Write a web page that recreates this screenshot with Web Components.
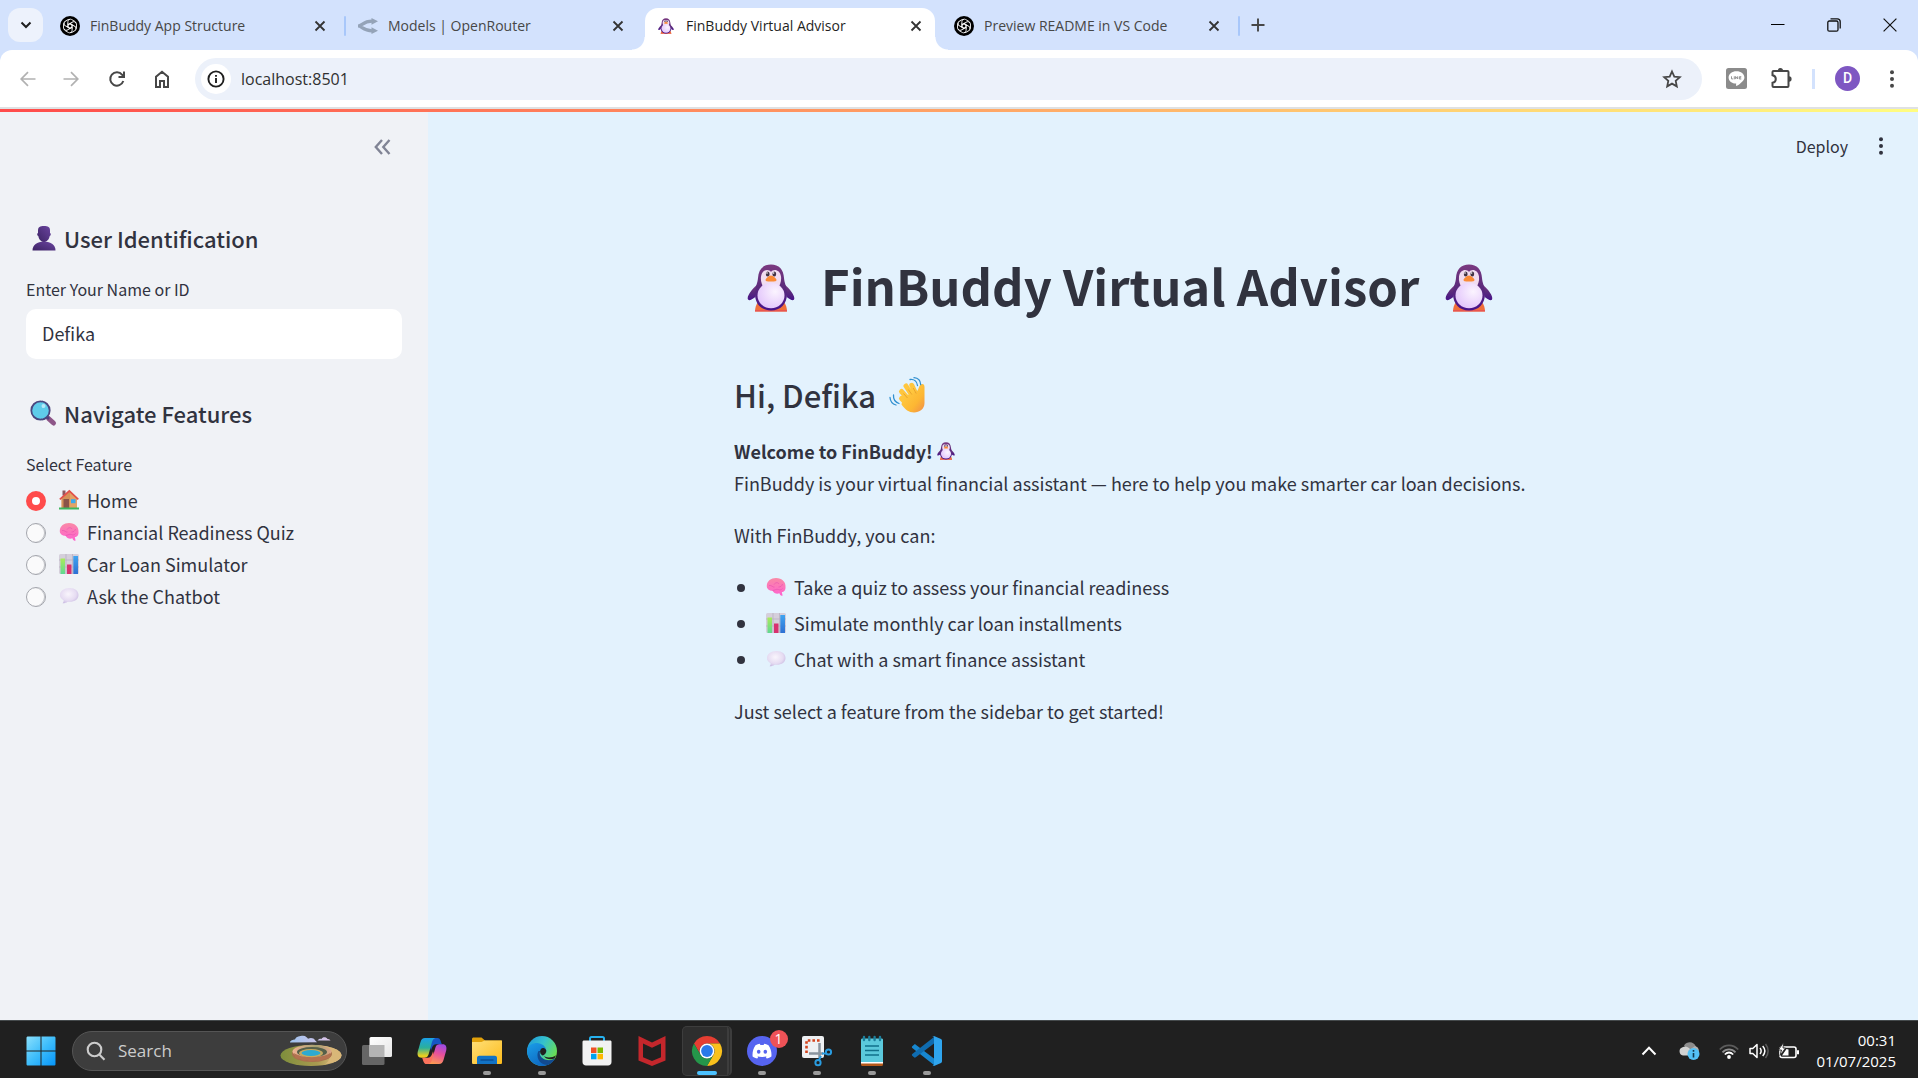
<!DOCTYPE html>
<html lang="en">
<head>
<meta charset="utf-8">
<title>FinBuddy Virtual Advisor</title>
<style>
html, body { margin: 0; height: 100%; }
body { overflow: hidden; background: #e3f2fd; }
</style>
</head>
<body>
<desk-top></desk-top>
<script>
const UI = '"Open Sans", "Noto Sans", sans-serif';
const APP = '"Noto Sans CJK SC", "Noto Sans", sans-serif';

const stroke = (w, d, cap = 'butt') => `<g fill="none" stroke="currentColor" stroke-width="${w}" stroke-linecap="${cap}">${d}</g>`;

/* Each icon: [viewBox, markup] */
const ICONS = {
  chevdown: ['0 0 12 12', stroke(2, '<path d="M1.5 3.5 6 8l4.500-4.500"/>')],
  close: ['0 0 12 12', stroke(1.8, '<path d="M1.500 1.500l9 9M10.500 1.500l-9 9"/>')],
  plus: ['0 0 14 14', stroke(1.9, '<path d="M7 .5v13M.5 7h13"/>')],
  gpt: ['0 0 20 20', `<circle cx="10" cy="10" r="10" fill="#000"/><g fill="none" stroke="#fff" stroke-width=".9">${[0,60,120,180,240,300].map(a => `<path transform="rotate(${a} 10 10)" d="M10 7.700 7.900 8.900V5.600a2.500 2.500 0 0 1 3.700-2.100l2.900 1.700a2.500 2.500 0 0 1 1.100 1.400M10 7.700l3.300 1.900"/>`).join('')}</g>`],
  router: ['0 0 20 16', '<g fill="none" stroke="#94a3b8" stroke-width="3.200"><path d="M0 8c4 0 5-4.800 14-4.800M0 8c4 0 5 4.800 14 4.800"/></g><path fill="#94a3b8" d="M13.500 0 20 3.300l-6.500 3.400zM13.500 9.300l6.500 3.400-6.500 3.300z"/>'],
  minimize: ['0 0 14 14', '<path fill="#000" d="M0 6h13.500v1H0z"/>'],
  restore: ['0 0 14 14', stroke(1.3, '<rect x=".8" y="3" width="10.200" height="10.200" rx="1.500"/><path d="M3.500.9h6.800a2.900 2.900 0 0 1 2.900 2.900v6.700"/>')],
  winclose: ['0 0 14 14', stroke(1.2, '<path d="M.6.6l12.800 12.800M13.400.6.6 13.400"/>')],
  back: ['0 0 16 16', stroke(1.7, '<path d="M15.500 8H1.500M8 1.200 1.200 8 8 14.800"/>')],
  forward: ['0 0 16 16', stroke(1.7, '<path d="M.5 8h14M8 1.200 14.800 8 8 14.800"/>')],
  reload: ['0 0 16 16', stroke(2, '<path d="M14.300 10A6.700 6.700 0 1 1 13.200 3.800L15 5.700"/><path d="M15 .5v5.500H9.500"/>')],
  home: ['0 0 16 18', stroke(2, '<path d="M2 17V6.800L8 1.700l6 5.100V17h-4v-6H6v6z"/>')],
  info: ['0 0 18 18', stroke(1.9, '<circle cx="9" cy="9" r="7.600"/><path d="M9 8v5M9 5v1.800"/>')],
  star: ['0 0 20 20', stroke(1.8, '<path d="M10 2.500l2.300 5.100 5.500.6-4.100 3.700 1.100 5.500-4.800-2.800-4.800 2.800 1.100-5.500-4.100-3.700 5.500-.6z"/>')],
  line: ['0 0 21 21', '<rect width="21" height="21" rx="2.500" fill="#8b8b8b"/><path fill="#fff" d="M10.500 3.200c4.400 0 7.900 2.700 7.900 6.200 0 3.100-3.500 5.700-7.500 8.400-.8.500-1-.1-.7-2.200-4.300-.1-7.600-2.700-7.600-6.200s3.500-6.200 7.900-6.200z"/><path fill="none" stroke="#8b8b8b" stroke-width=".9" d="M5.500 8.300v2.600h1.700M8.300 8.300v3M9.600 11.100V8.500l2 2.500V8.300M15.300 8.700h-2v2.300h2M13.300 9.800h1.800"/>'],
  puzzle: ['0 0 21 21', '<path d="M2.500 3h14c.6 0 1 .4 1 1v14c0 .6-.4 1-1 1h-14c-.6 0-1-.4-1-1v-3.200c2.200-.4 3.300-1.800 3.300-3.800S3.700 7.600 1.500 7.200V4c0-.6.4-1 1-1z" fill="none" stroke="currentColor" stroke-width="2"/><path fill="currentColor" d="M6.800 2.500a2.600 2.500 0 0 1 5.200 0zM18 8.200a2.600 2.800 0 0 1 0 5.600z"/>'],
  dots: ['0 0 4 18', '<g fill="currentColor"><circle cx="2" cy="2.300" r="2"/><circle cx="2" cy="9" r="2"/><circle cx="2" cy="15.700" r="2"/></g>'],
  collapse: ['0 0 17 16', stroke(2.4, '<path d="M8 1 1.800 8 8 15M15.500 1 9.300 8l6.200 7"/>')],

  penguin: ['0 0 48 48', `<defs><linearGradient id="b" x1="0" y1="0" x2="0" y2="1"><stop offset="0" stop-color="#7b3a80"/><stop offset=".5" stop-color="#5a2a7c"/><stop offset="1" stop-color="#47128a"/></linearGradient><radialGradient id="w" cx=".65" cy=".35" r=".8"><stop offset="0" stop-color="#fbf4ff"/><stop offset="1" stop-color="#e0c0fb"/></radialGradient></defs>
    <path fill="#f0703a" d="M11 38h26c2 3 3 6 3 9.500H8c0-3.500 1-6.500 3-9.500z"/><path fill="#e85550" d="M8 46h32v1.500H8z"/>
    <path fill="url(#b)" d="M11 20C4 26 0 32 .8 35c.8 2.500 4 .5 7.500-2zM37 20c7 6 11 12 10.200 15-.8 2.500-4 .5-7.500-2z"/>
    <path fill="url(#b)" d="M24 .5c8 0 12.500 5 13 13.500.3 5 3 9 3 16C40 40 33.500 46.500 24 46.500S8 40 8 30c0-7 2.700-11 3-16C11.500 5.500 16 .5 24 .5z"/>
    <path fill="#f1dcf0" d="M24 8c2.500-3.500 9-2.500 10 4.500.6 4.500-1 8-3 12H17c-2-4-3.600-7.500-3-12C15 5.500 21.500 4.500 24 8z"/>
    <ellipse cx="24" cy="31.500" rx="13.500" ry="12.700" fill="url(#w)"/>
    <ellipse cx="20.700" cy="10" rx="1.900" ry="2.600" fill="#423344"/><ellipse cx="27.300" cy="10" rx="1.900" ry="2.600" fill="#423344"/><circle cx="20" cy="9" r=".8" fill="#fff"/><circle cx="26.600" cy="9" r=".8" fill="#fff"/>
    <path fill="#fa8a35" d="M24 11.500c2 0 5.500 3.200 5.500 4.500 0 1.500-2.500 1.500-5.500 1.500s-5.500 0-5.500-1.500c0-1.300 3.500-4.500 5.500-4.500z"/>`],
  wave: ['0 0 36 36', `<defs><linearGradient id="h" x1="0" y1="0" x2="1" y2="1"><stop offset="0" stop-color="#ffd348"/><stop offset=".65" stop-color="#fdb733"/><stop offset="1" stop-color="#f08c4a"/></linearGradient></defs>
    <g stroke="#ffc63e" stroke-width="5" stroke-linecap="round" fill="none"><path d="M12.500 21.500 17 26M12.500 14.500l8 9M17 9l7 11M22.800 8.300l5 10.500"/></g>
    <path fill="url(#h)" d="M14 20l14-6c1.500-1 1.500-5 4-6.500 2-1 3.500 0 3.500 2.500V26c0 6-5 9.500-10.500 9.500-5 0-9-3-12.500-8z"/>
    <path d="M14.500 16.500l4 4.500M19.300 12.500l3.500 5M24.200 11l3 5.500" stroke="#e59a28" stroke-width=".8" fill="none"/>
    <path d="M21 2.500c4-.5 7 2 7.500 6M25 .7c4 .3 6.500 3 6.700 7M4.500 18c-.3 4 1.500 7 5.500 8.500M1 20.500c.3 4 2.500 6.500 6 7.500" stroke="#3190d0" stroke-width="1.300" fill="none" stroke-linecap="round"/>`],
  person: ['0 0 24 24', '<defs><linearGradient id="p" x1="0" x2="1" y1="1" y2="0"><stop offset="0" stop-color="#3c2364"/><stop offset="1" stop-color="#6b45a0"/></linearGradient></defs><path fill="url(#p)" d="M6 4.500C6 1 8 0 12 0s6 1 6 4.500V7c1.200.3 1 2.600-.3 3-.6 3.500-3 6-5.700 6s-5.100-2.500-5.700-6C5 9.600 4.800 7.300 6 7z"/><path fill="url(#p)" d="M.5 24.500C.5 19 5 15.500 12 15.500S23.500 19 23.500 24.500z"/>'],
  search: ['0 0 26 26', '<path d="M18.500 18.500l5 4.500" stroke="#8d5688" stroke-width="5" stroke-linecap="round"/><path d="M16 16l3 3" stroke="#54417f" stroke-width="2.500"/><circle cx="10.500" cy="10.500" r="9.200" fill="#5fccea" stroke="#4a477f" stroke-width="1.800"/><circle cx="13.500" cy="6" r="2" fill="#b7e9f8"/>'],
  house: ['0 0 20 20', '<path fill="#8d5960" d="M3.500.5h3v5h-3z"/><path fill="#e3a265" d="M2.500 8 11 .8 18 8v10.500H2.500z"/><path fill="#c87f4b" d="M2.500 8.500 11 1v17.500H2.500z" opacity=".5"/><path fill="#8a5348" d="M4.500 9h5.500v9H4.500z"/><path fill="#3ba8ee" d="M12 9.200h4.500v4H12z"/><path d="M.8 9.300 10.300 1l9 8.300" fill="none" stroke="#e2504a" stroke-width="1.700"/><path fill="#3db65c" d="M0 17.500h20v2H0z"/>'],
  brain: ['0 0 20 20', '<defs><linearGradient id="r" x1="0" x2="0" y1="0" y2="1"><stop offset="0" stop-color="#f98aa6"/><stop offset="1" stop-color="#ff62cf"/></linearGradient></defs><path fill="url(#r)" d="M10 1c6 0 10 4 9.500 9 .3 3-1.500 5-3.700 5l.8 3.500c-1.300.8-2.600-.1-3.200-2.200-3 1-5.500-.3-6.900-2.600C3.500 14 .5 12 .8 8.500 1 4 5 1 10 1z"/><path fill="none" stroke="#e855b0" stroke-width=".7" d="M3 8.500c3-.5 3.500 2 5.500 1.500M8 7.500c1.500-2.300 4-2.300 5-.5M12.500 10c2 0 3.500-1 4-3M6.500 13.500c2 0 4-2 6-1s3 0 4-1"/>'],
  chart: ['0 0 20 20', '<defs><linearGradient id="g" x1="0" x2="0" y1="0" y2="1"><stop offset="0" stop-color="#a9ec5a"/><stop offset="1" stop-color="#5fd893"/></linearGradient><linearGradient id="u" x1="0" x2="0" y1="0" y2="1"><stop offset="0" stop-color="#3fa4f0"/><stop offset="1" stop-color="#2e70d3"/></linearGradient></defs><rect width="20" height="20" rx="1.500" fill="#d5cfdb"/><path d="M0 6h20M0 13h20M7 0v20M13.500 0v20" stroke="#b5aebf" stroke-width=".7"/><path fill="url(#g)" d="M1.500 4.500H6V20H1.500z"/><path fill="#d8316f" d="M8 10.500h4.500V20H8z"/><path fill="url(#u)" d="M14.300 2H19v18h-4.700z"/>'],
  bubble: ['0 0 20 20', '<defs><radialGradient id="c" cx=".45" cy=".4" r=".7"><stop offset="0" stop-color="#f9f5fc"/><stop offset=".6" stop-color="#e6dcf2"/><stop offset="1" stop-color="#c0b0dc"/></radialGradient></defs><path fill="url(#c)" d="M10.500 2C16 2 19.500 5 19.500 9s-3.500 6.800-9 6.800l-2-.1c-1 1-3.200 1.600-4.900 1.500.9-.8 1.200-2 1-3C2 12.800 1 11 1 9c0-4 4-7 9.500-7z"/>'],

  windows: ['0 0 30 30', '<defs><linearGradient id="s" x1="0" y1="0" x2="1" y2="1"><stop offset="0" stop-color="#8be0fc"/><stop offset=".5" stop-color="#3ebdfb"/><stop offset="1" stop-color="#0595fa"/></linearGradient></defs><path fill="url(#s)" d="M2 .5h12.500v14H.5V2C.5 1 1 .5 2 .5zM15.500.5H28c1 0 1.500.5 1.500 1.500v12.500h-14zM.5 15.500h14v14H2c-1 0-1.500-.5-1.500-1.500zM15.500 15.500h14V28c0 1-.5 1.500-1.500 1.500H15.500z"/>'],
  magnify: ['0 0 20 20', stroke(2.1, '<circle cx="8.500" cy="8.500" r="6.800"/><path d="M13.300 13.500l5.200 5.300"/>')],
  spring: ['0 0 62 32', '<defs><linearGradient id="k" x1="0" x2="1"><stop offset="0" stop-color="#7e8e3c"/><stop offset=".6" stop-color="#a99a50"/><stop offset="1" stop-color="#e4c28a"/></linearGradient><linearGradient id="cl" x1="0" x2="1"><stop offset="0" stop-color="#9fc3ee"/><stop offset="1" stop-color="#dcc2e6"/></linearGradient><linearGradient id="rim" x1="0" x2="1"><stop offset="0" stop-color="#f0b193"/><stop offset=".6" stop-color="#a5a070"/><stop offset="1" stop-color="#dda588"/></linearGradient></defs><ellipse cx="31" cy="20.500" rx="30.500" ry="10.500" fill="url(#k)"/><path fill="#d9b778" d="M31 10c17 0 30 4 30.500 10-.5 6-9 8-16 9 8-6 5-15-14.500-19z"/><ellipse cx="32" cy="19" rx="20" ry="8" fill="#a86f4d"/><ellipse cx="32" cy="16.500" rx="19.500" ry="6.800" fill="url(#rim)"/><ellipse cx="32" cy="17" rx="15" ry="5" fill="#55604a"/><ellipse cx="31" cy="18.200" rx="12" ry="4.200" fill="#c6a95f"/><ellipse cx="31" cy="18" rx="9.500" ry="2.900" fill="#2caad0"/><path fill="#b37250" d="M15 22c2 3 5 1 7 3s5-1 7 1 5-1 8 0 6-2 8-2 5-1 6-3l-1-3c-6 5-28 6-36 0z"/><path fill="url(#cl)" d="M10 7.500c0-2 3-3 5-3C16 1.500 20 .8 23 .8c3 0 4 2 5 3 3-1.500 6-.5 7 1.500l2 2zM37.500 5.500c1-1.500 3-2 4-1.500 1-2.500 5-2 6 0 1.500-.3 2.500.6 3 1.500z"/>'],
  taskview: ['0 0 30 28', '<defs><linearGradient id="t" x1="0" y1="0" x2="1" y2="1"><stop offset="0" stop-color="#fff"/><stop offset="1" stop-color="#e6e6e6"/></linearGradient></defs><rect y="8" width="22.500" height="20" rx="1.500" fill="#666"/><rect x="7.500" width="22.500" height="20" rx="1.500" fill="url(#t)"/><path fill="#b4b4b4" d="M7.500 8h15v12h-15z"/>'],
  copilot: ['0 0 30 28', '<defs><linearGradient id="c1" x1="0" y1="0" x2="0" y2="1"><stop offset="0" stop-color="#1ba0e8"/><stop offset=".5" stop-color="#2bb09a"/><stop offset=".9" stop-color="#e8cf20"/></linearGradient><linearGradient id="c2" x1=".6" y1="0" x2=".3" y2="1"><stop offset="0" stop-color="#a04be0"/><stop offset=".45" stop-color="#e8509b"/><stop offset="1" stop-color="#fd9a52"/></linearGradient></defs><path fill="#1556c5" d="M16 1h4.500c3 0 3 3.500 4.500 6.300h-6c-3 0-4 3-5 6.500L12.500 8z"/><path fill="url(#c1)" d="M8 1h10.500c-3 1-3.500 4-4.300 7l-2.500 9c-1 3-2 3.700-5 3.700H4.500C1 20.700 0 18 .8 14.500L3.500 5C4.300 2.300 5.500 1 8 1z"/><path fill="#fb725c" d="M14 27H9.500c-3 0-3-3.500-4.500-6.300h6c3 0 4-3 5-6.500l1.500 5.500z"/><path fill="url(#c2)" d="M22 27H11.500c3-1 3.500-4 4.300-7l2.500-9c1-3 2-3.700 5-3.700h2.200c3.500 0 4.500 2.700 3.700 6.200L26.500 23c-.8 2.700-2 4-4.500 4z"/>'],
  folder: ['0 0 30 28', '<defs><linearGradient id="f" x1="0" x2="1" y1="0" y2="1"><stop offset="0" stop-color="#ffdf78"/><stop offset="1" stop-color="#fdbc1c"/></linearGradient></defs><path fill="#e2a10a" d="M0 2C0 1 .8.500 1.500.500H9.500l3.500 3h15.500c1 0 1.500.6 1.500 1.500v6H0z"/><path fill="url(#f)" d="M0 5h9.500l3-1.500H30V25.500c0 1-.5 1.500-1.500 1.500h-27C.5 27 0 26.500 0 25.500z"/><path fill="#1273c5" d="M5 27v-6c0-1.500 1-2.300 2.300-2.300h15.400c1.300 0 2.300.8 2.300 2.300v6z"/><path d="M8.500 23h13" stroke="#0b4f97" stroke-width="1.500"/>'],
  edge: ['0 0 30 30', '<defs><linearGradient id="e1" x1="0" x2="1" y1="0" y2=".6"><stop offset="0" stop-color="#1c94dc"/><stop offset=".5" stop-color="#35c1cd"/><stop offset="1" stop-color="#6de14b"/></linearGradient><linearGradient id="e2" x1="0" x2=".7" y1="0" y2="1"><stop offset="0" stop-color="#1a9ee8"/><stop offset="1" stop-color="#0d62bd"/></linearGradient></defs><circle cx="15" cy="15" r="15" fill="url(#e1)"/><path fill="url(#e2)" d="M.2 13C2 8.500 7 6.500 11.500 7.200 17 8 19.500 12 19.300 15.500c-1.700-2-4.500-2.500-6-.5-2.500 4 2 9.500 8 9.500 3 0 5-1 6.500-2C25 27.500 20.500 30 15 30 6 30-.6 22 .2 13z"/><path fill="#124a90" d="M11.500 15c-3 5 .5 14 9 14 3.500-1.200 6-3.800 7.500-6.600-6 3.500-13 1.600-15-3.400-.5-1.500-.5-2.700.3-4z"/><path fill="#202020" d="M16 19.500c1.500-1 3.500-2.500 3.300-4.800-.3-1.400-1.500-3-3.500-2.700-2 .3-3.300 2.500-2.500 5 .4 1.300 1.400 2.200 2.700 2.500zM17 20c2 2 8.500 2 12-.8l-1.500 3.300c-4 1.800-9 .5-10.500-2.500z"/>'],
  store: ['0 0 30 30', '<path d="M8 6V2.500C8 1.500 8.500 1 9.500 1h11c1 0 1.500.5 1.500 1.500V6" fill="none" stroke="#26b1ee" stroke-width="2"/><path fill="#f2f2f2" d="M.5 6c0-1 .5-1.500 1.500-1.500h26c1 0 1.500.5 1.500 1.500v20c0 2-1.500 3.500-3.500 3.500H4C2 29.500.5 28 .5 26z"/><path fill="#f05125" d="M9 11.500h5.500V17H9z"/><path fill="#7dba00" d="M15.500 11.500H21V17h-5.500z"/><path fill="#00a3ee" d="M9 17.800h5.500v5.500H9z"/><path fill="#feb800" d="M15.500 17.800H21v5.500h-5.500z"/>'],
  mcafee: ['0 0 28 30', '<path fill="#c4272c" d="M.5 0 14 6.500 27.500 0v24.500L14 30 .5 24.500zM5 7.500v13.800l9 3.800 9-3.800V7.500l-9 4.300z" fill-rule="evenodd"/>'],
  chrome: ['0 0 30 30', '<path fill="#e53e32" d="M2 7.500A15 15 0 0 1 28 7.500H15a7.500 7.500 0 0 0-6.500 11.200z"/><path fill="#fac11c" d="M28 7.500A15 15 0 0 1 15 30l6.500-11.200A7.500 7.500 0 0 0 15 7.500z"/><path fill="#25964a" d="M2 7.500A15 15 0 0 0 15 30l6.500-11.200a7.500 7.500 0 0 1-13 0z"/><circle cx="15" cy="15" r="7.400" fill="#fff"/><circle cx="15" cy="15" r="5.900" fill="#2a79ea"/>'],
  discord: ['0 0 30 30', '<circle cx="15" cy="15" r="15" fill="#5664f0"/><path fill="#fff" d="M8.500 9.200c1.500-.8 3-1.200 4.300-1.400l.6 1.100h3.200l.6-1.100c1.300.2 2.800.6 4.300 1.400 2.300 3.500 3.300 7.200 2.900 11.300-1.500 1.100-3 1.700-4.700 2l-1-1.700 1.500-.7c-3.300 1.300-7.100 1.300-10.400 0l1.500.7-1 1.700c-1.700-.3-3.200-.9-4.700-2-.4-4.100.6-7.800 2.900-11.300z"/><ellipse cx="11.700" cy="15.700" rx="1.800" ry="2" fill="#5664f0"/><ellipse cx="18.300" cy="15.700" rx="1.800" ry="2" fill="#5664f0"/>'],
  snip: ['0 0 30 30', '<rect width="22" height="22" rx="2" fill="#eef0f2"/><path d="M4.500 17V4.500H18" fill="none" stroke="#d4431c" stroke-width="2.600" stroke-dasharray="2.600 2"/><path d="M17.500 7v15M7 17.500h14" stroke="#8a949e" stroke-width="2.500"/><g fill="none" stroke="#2a9ce0" stroke-width="2"><circle cx="26.500" cy="16" r="2.600"/><circle cx="16" cy="26.700" r="2.600"/><path d="M24 17.500h-4M17 24l2-4"/></g>'],
  notepad: ['0 0 24 30', '<path fill="#b5591a" d="M1 25h22v3.500c0 .8-.5 1.500-1.500 1.500h-19C1.500 30 1 29.300 1 28.500z"/><path fill="#fff" d="M1 24h22v3.500H1z"/><path fill="#5bc9dc" d="M1 4c0-1 .5-1.500 1.500-1.500h19c1 0 1.500.5 1.500 1.500v22H1z"/><path d="M5 10h14M5 14.500h14M5 19h14" stroke="#11708a" stroke-width="1.700"/><path d="M4 1v3M9.300 1v3M14.600 1v3M20 1v3" stroke="#1c7f9c" stroke-width="2.400" stroke-linecap="round"/>'],
  vscode: ['0 0 30 30', '<path fill="#1787d0" d="M0 10.500 2 8.700c.6-.5 1.200-.5 1.800 0L22 22.500V29L.3 12c-.5-.5-.6-1-.3-1.500z"/><path fill="#0f6cb0" d="M0 19.500 2 21.300c.6.5 1.200.5 1.800 0L22 7.500V1L.3 18c-.5.500-.6 1-.3 1.500z"/><path fill="#2fa5ee" d="M22 0l7 3c.7.400 1 1 1 1.700v20.600c0 .7-.3 1.300-1 1.700l-7 3c-.6.200-1 0-1.500-.5C21.500 30 22 29 22 28V2c0-1-.5-2-1.500-1.500z"/>'],

  chevup: ['0 0 16 16', stroke(2, '<path d="M1.500 11.500 8 4.800l6.500 6.700"/>')],
  cloud: ['0 0 22 18', '<path fill="#8d8d8d" d="M5 3.500C8-1 15-1 17 5l-6 5z"/><path fill="#d2d2d2" d="M4 13.500a4.300 4.300 0 0 1-.5-8.300C6 3.700 9 4.500 11 7l5 6.500z"/><path fill="#b2b2b2" d="M9 9l7-5c3 .8 4.500 3.500 3.500 6.500z"/><circle cx="14.500" cy="12" r="6" fill="#54c1f5"/><path d="M14.500 11v4.500M14.500 8v1.800" stroke="#12384d" stroke-width="1.600"/>'],
  wifi: ['0 0 20 16', '<g fill="none" stroke-width="1.700"><path stroke="#5b5b5b" d="M.8 6.500c5.200-5.500 13.200-5.500 18.400 0"/><path stroke="#8e8e8e" d="M3.500 9.300c3.700-4 9.300-4 13 0"/><path stroke="#fff" d="M5.800 11.500c2.600-2.500 5.800-2.500 8.400 0"/></g><circle cx="10" cy="14" r="1.900" fill="#fff"/>'],
  speaker: ['0 0 20 16', '<g fill="none" stroke="#fff" stroke-width="1.500" stroke-linejoin="round"><path d="M1 5.500v5h2.800L8 14.500v-13L3.800 5.500zM11 5c1.400 1.800 1.400 4.200 0 6M13.700 3c2.600 3 2.600 7 0 10"/><path stroke="#5b5b5b" d="M16.500 1c3.500 4.200 3.500 9.800 0 14"/></g>'],
  battery: ['0 0 20 16', '<rect x="1" y="4" width="16" height="10.500" rx="2" fill="none" stroke="#fff" stroke-width="1.600"/><path fill="#fff" d="M18 7.300h2v4h-2zM3 12.500h6.500V6.500L7.500 6z"/><path fill="#fff" stroke="#202020" stroke-width=".8" d="M4.500-.5-.5 7h3L1 12.500 6.500 5H4z"/>']
};

class SvgIcon extends HTMLElement {
  connectedCallback() {
    const [box, art] = ICONS[this.getAttribute('name')];
    const [, , w, h] = box.split(' ').map(Number);
    const width = Number(this.getAttribute('width') || w);
    const label = this.getAttribute('label');
    this.attachShadow({ mode: 'open' }).innerHTML =
      `<style>:host{display:inline-flex;flex:none}svg{display:block;overflow:visible}</style>
       <svg viewBox="${box}" width="${width}" height="${Math.round(width * h / w)}" ${label ? `role="img" aria-label="${label}"` : 'aria-hidden="true"'}>${art}</svg>`;
  }
}
customElements.define('svg-icon', SvgIcon);

const define = (name, render) => customElements.define(name, class extends HTMLElement {
  connectedCallback() {
    if (!this.shadowRoot) this.attachShadow({ mode: 'open' }).innerHTML = render(this);
  }
});

const RESET = `*{box-sizing:border-box}button{border:0;padding:0;background:none;font:inherit;color:inherit;display:inline-flex;align-items:center;justify-content:center}`;

define('browser-tab', () => `
<style>${RESET}
:host{display:flex;align-items:center;width:298px;height:42px;min-width:0;position:relative;color:#474747}
:host([active]){color:#1f1f1f}
.tab{flex:1;min-width:0;height:42px;display:flex;align-items:center;padding:0 11px 6px 12px;gap:10px;margin-right:3px}
:host([active]) .tab{background:#fff;border-radius:13px 13px 0 0;margin:0 5px 0 1px;padding:0 9px 6px 11px}
:host([active])::before,:host([active])::after{content:"";position:absolute;bottom:0;width:13px;height:13px}
:host([active])::before{left:-12px;background:radial-gradient(circle at 0 0,transparent 12px,#fff 13px)}
:host([active])::after{right:-6px;background:radial-gradient(circle at 100% 0,transparent 12px,#fff 13px)}
.fav{display:flex;width:20px;justify-content:center}
.title{flex:1;justify-content:flex-start;white-space:nowrap;overflow:hidden}
.close{width:20px;height:20px;color:#333}
.rule{width:2px;height:20px;margin-bottom:6px;border-radius:1px}
:host([rule]) .rule{background:#a8c7fa}
</style>
<div class="tab"><span class="fav"><slot name="icon"></slot></span><button class="title"><slot></slot></button>
<button class="close" aria-label="Close tab"><svg-icon name="close"></svg-icon></button></div>
<span class="rule"></span>`);

define('browser-chrome', () => `
<style>${RESET}
:host{display:block;font:14px/20px ${UI};background:#d3e2fd;border-bottom:2px solid #dfe1e3}
.strip{display:flex;align-items:center;height:50px;padding:8px 0 0 8px}
.drop{width:35px;height:34px;border-radius:12px;background:#edf2fc;margin:0 5px 8px 0;color:#1f1f1f}
.new{margin:0 0 8px 8px;width:20px;height:20px;color:#474747}
.win{margin:0 0 8px auto;display:flex;color:#111}
.win button{width:56px;height:34px}
.bar{display:flex;align-items:center;height:57px;background:#fff;border-radius:12px 12px 0 0;padding:0 16px 0 11px;color:#474747}
.nav{display:flex;margin-right:8px}
.nav button{width:50px;height:40px}
.nav button:nth-child(-n+2){color:#b1b1b1}
.nav button:nth-child(1){width:34px}
.nav button:nth-child(2){width:52px}
.nav button:nth-child(3){width:40px}
.omni{flex:1;display:flex;align-items:center;height:42px;border-radius:21px;background:#ecf1fa;padding:0 20px 0 6px}
.site{width:30px;height:30px;border-radius:50%;background:#fff;color:#1f1f1f}
.omni input{flex:1;min-width:0;border:0;outline:0;background:none;font:16px/24px ${UI};color:#303030;padding:0 0 0 10px}
.tools{display:flex;align-items:center;gap:24px;margin-left:24px}
.tools i{width:3px;height:20px;background:#d3e2fd;margin:0 -4px}
.avatar{width:25px;height:25px;border-radius:50%;background:#7e57c2;color:#fff;font:500 14px/25px Roboto,sans-serif}
.more{width:20px;height:24px;margin-left:-2px}
</style>
<div class="strip">
  <button class="drop" aria-label="Search tabs"><svg-icon name="chevdown"></svg-icon></button>
  <browser-tab rule><svg-icon slot="icon" name="gpt"></svg-icon>FinBuddy App Structure</browser-tab>
  <browser-tab><svg-icon slot="icon" name="router"></svg-icon>Models | OpenRouter</browser-tab>
  <browser-tab active><svg-icon slot="icon" name="penguin" width="16"></svg-icon>FinBuddy Virtual Advisor</browser-tab>
  <browser-tab rule><svg-icon slot="icon" name="gpt"></svg-icon>Preview README in VS Code</browser-tab>
  <button class="new" aria-label="New tab"><svg-icon name="plus"></svg-icon></button>
  <div class="win"><button aria-label="Minimize"><svg-icon name="minimize"></svg-icon></button><button aria-label="Restore"><svg-icon name="restore"></svg-icon></button><button aria-label="Close"><svg-icon name="winclose"></svg-icon></button></div>
</div>
<div class="bar">
  <div class="nav"><button aria-label="Back"><svg-icon name="back"></svg-icon></button><button aria-label="Forward"><svg-icon name="forward"></svg-icon></button><button aria-label="Reload"><svg-icon name="reload"></svg-icon></button><button aria-label="Home"><svg-icon name="home"></svg-icon></button></div>
  <div class="omni"><button class="site" aria-label="Site information"><svg-icon name="info"></svg-icon></button><input type="text" aria-label="Address" value="localhost:8501"><button aria-label="Bookmark"><svg-icon name="star"></svg-icon></button></div>
  <div class="tools"><button aria-label="LINE"><svg-icon name="line"></svg-icon></button><button aria-label="Extensions"><svg-icon name="puzzle"></svg-icon></button><i></i><button class="avatar">D</button><button class="more" aria-label="Menu"><svg-icon name="dots"></svg-icon></button></div>
</div>`);

define('side-heading', () => `
<style>:host{display:block}h3{margin:0;font:500 22px/30px ${APP};display:flex;align-items:center;gap:8px}span{display:flex;width:30px;justify-content:flex-end}</style>
<h3><span><slot name="icon"></slot></span><slot></slot></h3>`);

define('feature-radio', el => `
<style>:host{display:block}
label{display:flex;align-items:center;height:32px;font:18px/32px ${APP}}
input{appearance:none;width:20px;height:20px;margin:2px 13px 0 0;border-radius:50%;background:#fafafb;border:1px solid #a3a5ac;box-shadow:inset -1px 0 0 #c3c5ca}
input:checked{border:6px solid #ff4b4b;background:#fff;box-shadow:none}
span{display:flex;margin-right:8px}
</style>
<label><input type="radio" name="feature" ${el.hasAttribute('checked') ? 'checked' : ''}><span><slot name="icon"></slot></span><slot></slot></label>`);

define('side-panel', () => `
<style>${RESET}
:host{display:block;flex:none;width:428px;background:#f0f2f6;color:#31333f}
header{height:76px;display:flex;align-items:center;justify-content:flex-end;padding-right:37px;color:#808495}
.body{padding:38px 26px}
.cap{display:block;font:16px/24px ${APP};margin:24px 0 8px}
input{display:block;width:100%;height:50px;border:0;border-radius:10px;background:#fff;font:18px/26px ${APP};color:#31333f;padding:0 16px 2px;margin-bottom:39px;outline:0}
</style>
<header><button aria-label="Collapse sidebar"><svg-icon name="collapse"></svg-icon></button></header>
<div class="body">
  <side-heading><svg-icon slot="icon" name="person" width="24" label="👤"></svg-icon>User Identification</side-heading>
  <label class="cap" for="who">Enter Your Name or ID</label>
  <input id="who" type="text" value="Defika">
  <side-heading><svg-icon slot="icon" name="search" width="26" label="🔍"></svg-icon>Navigate Features</side-heading>
  <span class="cap" id="feat">Select Feature</span>
  <div role="radiogroup" aria-labelledby="feat">
    <feature-radio checked><svg-icon slot="icon" name="house" label="🏠"></svg-icon>Home</feature-radio>
    <feature-radio><svg-icon slot="icon" name="brain" label="🧠"></svg-icon>Financial Readiness Quiz</feature-radio>
    <feature-radio><svg-icon slot="icon" name="chart" label="📊"></svg-icon>Car Loan Simulator</feature-radio>
    <feature-radio><svg-icon slot="icon" name="bubble" label="💬"></svg-icon>Ask the Chatbot</feature-radio>
  </div>
</div>`);

define('advisor-page', () => `
<style>${RESET}
:host{display:block;flex:1;min-width:0;background:#e3f2fd;color:#31333f;font:18px/32px ${APP}}
header{height:76px;display:flex;align-items:center;justify-content:flex-end;gap:31px;padding-right:35px;font-size:16px;line-height:24px}
header button{padding-bottom:2px}
main{max-width:878px;margin:0 auto;padding-top:67px}
h1{margin:0 0 56px;font:700 49px/66px ${APP};display:flex;align-items:center;gap:26px;padding-left:13px}
h1 svg-icon{margin-top:6px}
h2{margin:0 0 19px;font:500 31px/42px ${APP};display:flex;align-items:center;gap:13px}
p{margin:0 0 20px}
strong{font-weight:700;display:flex;align-items:center;gap:4px}
ul{margin:0 0 20px;padding:0;list-style:none;display:grid;gap:4px}
li{display:flex;align-items:center;gap:8px}
li::before{content:"";width:8px;height:8px;border-radius:50%;background:#31333f;margin:2px 13px 0 3px;flex:none}
</style>
<header><button>Deploy</button><button aria-label="Main menu"><svg-icon name="dots"></svg-icon></button></header>
<main>
  <h1><svg-icon name="penguin" label="🐧"></svg-icon>FinBuddy Virtual Advisor<svg-icon name="penguin" label="🐧"></svg-icon></h1>
  <h2>Hi, Defika <svg-icon name="wave" label="👋"></svg-icon></h2>
  <p><strong>Welcome to FinBuddy! <svg-icon name="penguin" width="18" label="🐧"></svg-icon></strong>FinBuddy is your virtual financial assistant — here to help you make smarter car loan decisions.</p>
  <p>With FinBuddy, you can:</p>
  <ul>
    <li><svg-icon name="brain" label="🧠"></svg-icon>Take a quiz to assess your financial readiness</li>
    <li><svg-icon name="chart" label="📊"></svg-icon>Simulate monthly car loan installments</li>
    <li><svg-icon name="bubble" label="💬"></svg-icon>Chat with a smart finance assistant</li>
  </ul>
  <p>Just select a feature from the sidebar to get started!</p>
</main>`);

define('task-button', el => `
<style>${RESET}
:host{display:block;width:55px;flex:none}
button{position:relative;display:flex;width:50px;height:50px;margin:0 auto;border-radius:5px}
:host([state=open]) button::after,:host([state=active]) button::after{content:"";position:absolute;bottom:1px;width:8px;height:4px;border-radius:2px;background:#9a9a9a}
:host([state=active]) button{background:#2e2e2e;border:1px solid #3d3d3d;border-right:5px double #3d3d3d;padding-left:4px}
:host([state=active]) button::after{width:20px;background:#4cc2ff;bottom:0}
.badge{position:absolute;top:4px;left:33px;width:18px;height:18px;border-radius:50%;background:#ee5257;color:#fff;font:14px/18px ${UI};text-align:center}
</style>
<button aria-label="${el.getAttribute('label')}"><svg-icon name="${el.getAttribute('icon')}"></svg-icon>${el.hasAttribute('badge') ? `<span class="badge">${el.getAttribute('badge')}</span>` : ''}</button>`);

define('task-bar', () => `
<style>${RESET}
:host{box-sizing:border-box;display:flex;align-items:center;height:58px;flex:none;background:#202020;border-top:1px solid #454a4c;padding:2px 22px 0 26px;font:17px/24px ${UI};color:#fff}
.pill{width:275px;height:40px;border-radius:20px;background:#3d3d3d;border:1px solid #555;margin:0 2px 0 16px;padding:0 4px 0 13px;color:#ccc;justify-content:flex-start}
.pill span{margin-left:12px;flex:1;text-align:left}
.apps{display:flex}
.tray{margin-left:auto;display:flex;align-items:center}
.hidden{margin-right:22px}
.drive{margin-right:18px}
.status{gap:10px}
.clock{font-size:15px;line-height:21px;text-align:right;margin-left:17px}
</style>
<button aria-label="Start"><svg-icon name="windows"></svg-icon></button>
<button class="pill"><svg-icon name="magnify"></svg-icon><span>Search</span><svg-icon name="spring"></svg-icon></button>
<div class="apps">
  <task-button icon="taskview" label="Task view"></task-button>
  <task-button icon="copilot" label="Copilot"></task-button>
  <task-button icon="folder" label="File Explorer" state="open"></task-button>
  <task-button icon="edge" label="Edge" state="open"></task-button>
  <task-button icon="store" label="Store"></task-button>
  <task-button icon="mcafee" label="McAfee"></task-button>
  <task-button icon="chrome" label="Chrome" state="active"></task-button>
  <task-button icon="discord" label="Discord" state="open" badge="1"></task-button>
  <task-button icon="snip" label="Snipping Tool" state="open"></task-button>
  <task-button icon="notepad" label="Notepad" state="open"></task-button>
  <task-button icon="vscode" label="VS Code" state="open"></task-button>
</div>
<div class="tray">
  <button class="hidden" aria-label="Hidden icons"><svg-icon name="chevup"></svg-icon></button>
  <button class="drive" aria-label="OneDrive"><svg-icon name="cloud"></svg-icon></button>
  <button class="status" aria-label="Network, volume and power"><svg-icon name="wifi"></svg-icon><svg-icon name="speaker"></svg-icon><svg-icon name="battery"></svg-icon></button>
  <div class="clock"><div>00:31</div><div>01/07/2025</div></div>
</div>`);

define('desk-top', () => `
<style>
:host{display:flex;flex-direction:column;height:100vh}
.app{flex:1;min-height:0;display:flex;position:relative}
.app::before{content:"";position:absolute;top:0;left:0;right:0;height:3px;background:linear-gradient(90deg,#ff4b4b,#fffd80)}
</style>
<browser-chrome></browser-chrome>
<div class="app"><side-panel></side-panel><advisor-page></advisor-page></div>
<task-bar></task-bar>`);
</script>
</body>
</html>
